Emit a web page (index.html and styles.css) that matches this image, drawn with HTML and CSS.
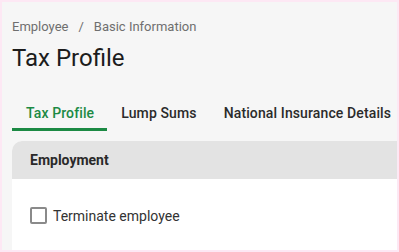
FILE: index.html
```html
<!DOCTYPE html>
<html lang="en">
  <head>
    <meta charset="UTF-8" />
    <title>Tax Profile</title>
    <link rel="stylesheet" href="styles.css">
  </head>
  <body>
    <div class="page">
      <nav class="breadcrumb">
        <span>Employee</span>
        <span class="sep">/</span>
        <span>Basic Information</span>
      </nav>
      <h1>Tax Profile</h1>

      <div class="tabs">
        <div class="tab active">Tax Profile</div>
        <div class="tab">Lump Sums</div>
        <div class="tab">National Insurance Details</div>
      </div>

      <div class="card">
        <div class="card-header">Employment</div>
        <div class="card-body">
          <label class="check">
            <span class="box"></span>
            Terminate employee
          </label>
        </div>
      </div>
    </div>
  </body>
</html>
```

FILE: styles.css
```css
html,
body {
  margin: 0;
  padding: 0;
}
body {
  font-family: Roboto, "Liberation Sans", sans-serif;
  background: #f6f6f6;
  color: #212121;
}
.page {
  box-sizing: border-box;
  width: 399px;
  height: 252px;
  border: 2px solid #fde8f4;
  overflow: hidden;
  padding: 0 0 0 10px;
}
.breadcrumb {
  margin-top: 17px;
  font-size: 13px;
  color: #6f6f6f;
  display: flex;
  gap: 10px;
  line-height: 16px;
}
h1 {
  margin: 9px 0 0;
  font-size: 24px;
  font-weight: 400;
  line-height: 28px;
  color: #1c1c1c;
}
.tabs {
  display: flex;
  margin-top: 22px;
  white-space: nowrap;
}
.tab {
  padding: 11px 13px 7px 14px;
  font-size: 14px;
  font-weight: 500;
  letter-spacing: 0.12px;
  color: #2b2b2b;
  border-bottom: 3px solid transparent;
  line-height: 16px;
}
.tab.active {
  color: #1c8a44;
  border-bottom-color: #1c8a44;
}
.card {
  margin-top: 10px;
  background: #fff;
  border-top-left-radius: 10px;
  overflow: hidden;
}
.card-header {
  background: #e3e3e3;
  padding: 11px 18px 11px;
  font-size: 14px;
  font-weight: 700;
  color: #2a2a2a;
  line-height: 16px;
}
.card-body {
  padding: 28px 18px 30px;
}
.check {
  display: flex;
  align-items: center;
  gap: 6px;
  font-size: 14px;
  line-height: 16px;
  color: #333;
}
.box {
  box-sizing: border-box;
  width: 17px;
  height: 17px;
  border: 2px solid #8a8a8a;
  border-radius: 2px;
}
```
